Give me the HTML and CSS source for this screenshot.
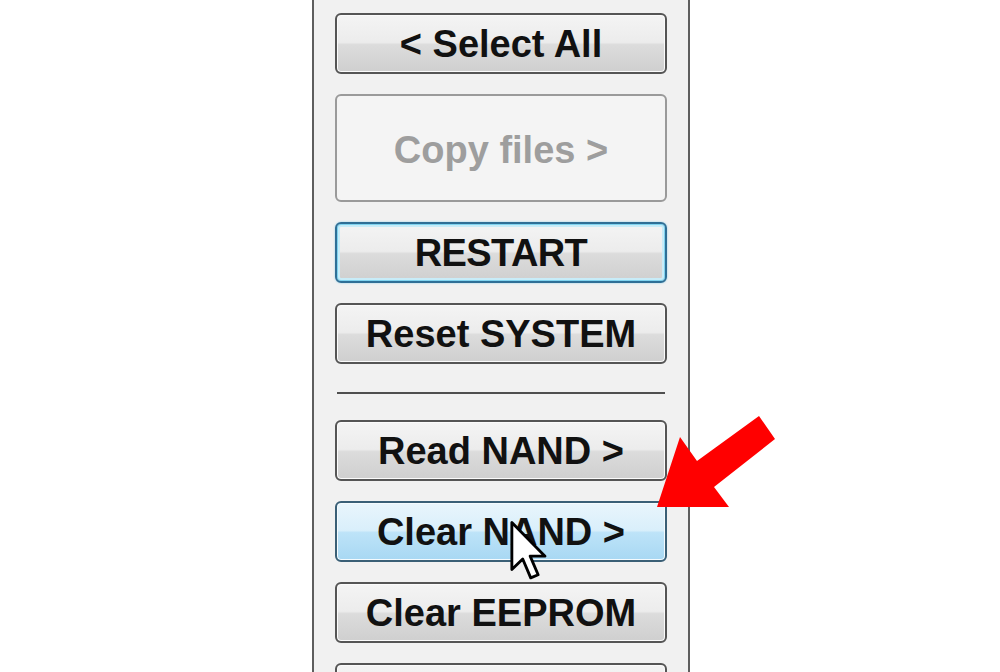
FILE: index.html
```html
<!DOCTYPE html>
<html>
<head>
<meta charset="utf-8">
<link rel="stylesheet" href="styles.css">
</head>
<body>
<div class="page">
  <div class="panel">
    <div class="btn">&lt; Select All</div>
    <div class="btn btn-disabled">Copy files &gt;</div>
    <div class="btn btn-focus">RESTART</div>
    <div class="btn">Reset SYSTEM</div>
    <div class="separator"></div>
    <div class="btn">Read NAND &gt;</div>
    <div class="btn btn-hover">Clear NAND &gt;</div>
    <div class="btn">Clear EEPROM</div>
    <div class="btn"></div>
  </div>
  <svg class="arrow" width="1000" height="672" viewBox="0 0 1000 672">
    <polygon points="657,507 680,437 697,461 759,416 775,439 714,487 729,507" fill="#ff0000"/>
  </svg>
  <svg class="cursor" width="40" height="64" viewBox="0 0 14 22">
    <path d="M1 1 L1 17.5 L4.8 13.8 L7.6 20.4 L10.2 19.3 L7.4 12.8 L12.6 12.8 Z" fill="#ffffff" stroke="#000000" stroke-width="1" stroke-linejoin="round"/>
  </svg>
</div>
</body>
</html>
```

FILE: styles.css
```css
html, body {
  margin: 0;
  padding: 0;
  background: #ffffff;
  overflow: hidden;
}

.page {
  position: relative;
  width: 1000px;
  height: 672px;
  overflow: hidden;
  font-family: "Liberation Sans", Arial, sans-serif;
}

.panel {
  margin-left: 312px;
  width: 332px;
  height: 700px;
  padding: 13px 21px 0 21px;
  background: #f1f1f1;
  border-left: 2px solid #5e5e5e;
  border-right: 2px solid #5e5e5e;
  display: flex;
  flex-direction: column;
  gap: 20px;
}

.btn {
  box-sizing: border-box;
  flex: 0 0 61px;
  height: 61px;
  border: 2px solid #555555;
  border-radius: 6px;
  box-shadow: inset 0 0 0 1px #fbfbfb;
  background: linear-gradient(to bottom, #f4f4f4 0%, #ececec 48%, #dcdcdc 52%, #cfcfcf 100%);
  display: flex;
  align-items: center;
  justify-content: center;
  font-size: 38px;
  font-weight: bold;
  color: #111111;
  padding-top: 1px;
}

.btn-disabled {
  flex-basis: 108px;
  height: 108px;
  background: #f4f4f4;
  border-color: #9a9a9a;
  box-shadow: none;
  color: #9e9e9e;
  padding-top: 4px;
}

.btn-focus {
  border-color: #2f6f96;
  box-shadow: inset 0 0 0 1px #7fd3ef, inset 0 0 0 3px #c8ecf8, 0 0 2px #8ccfe8;
  letter-spacing: -0.6px;
}

.btn-hover {
  border-color: #3a5f76;
  box-shadow: inset 0 0 0 1px #f4fbfe;
  background: linear-gradient(to bottom, #e9f5fc 0%, #d9effb 48%, #bde3f8 52%, #a8d8f3 100%);
}

.separator {
  flex: 0 0 2px;
  margin: 8px 2px 6px 2px;
  background: #4f4f4f;
}

.arrow {
  position: absolute;
  left: 0;
  top: 0;
}

.cursor {
  position: absolute;
  left: 509px;
  top: 519px;
}
```
